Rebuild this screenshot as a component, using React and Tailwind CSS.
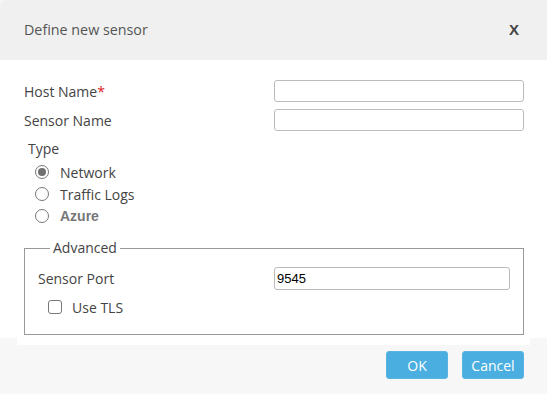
export default function App() {
  const radios = [
    { label: 'Network', checked: true },
    { label: 'Traffic Logs', checked: false },
    { label: 'Azure', checked: false, odd: true },
  ]

  return (
    <div className="w-[547px] h-[394px] bg-[#f7f7f7] flex flex-col text-[#444] font-['Open_Sans',sans-serif] text-[14px]">
      <div className="h-[60px] bg-[#f0f0f0] rounded-tl-[6px] flex items-center justify-between pl-6 pr-[28px] shrink-0">
        <span className="text-[#555] text-[14.3px]">Define new sensor</span>
        <span className="font-bold text-[#444] font-['Liberation_Sans',sans-serif] text-[15px]">X</span>
      </div>

      <div className="h-[278px] bg-white pl-6 pr-[23px] pt-[20px] shrink-0">
        <div className="grid grid-cols-[250px_1fr] items-center h-[22px]">
          <span>
            Host Name<span className="text-[#e02020]">*</span>
          </span>
          <input className="h-[22px] border border-[#bbb] rounded-[3px] outline-none" />
        </div>
        <div className="grid grid-cols-[250px_1fr] items-center h-[22px] mt-[7px]">
          <span>Sensor Name</span>
          <input className="h-[22px] border border-[#bbb] rounded-[3px] outline-none" />
        </div>

        <div className="mt-[8px] ml-[4px] leading-[20px]">Type</div>
        <div className="ml-[11px] mt-[2px] flex flex-col">
          {radios.map((r) => (
            <div key={r.label} className="flex items-center h-[22px] gap-[11px]">
              <span className="w-[14px] h-[14px] rounded-full border border-[#777] flex items-center justify-center">
                {r.checked && <span className="w-[8px] h-[8px] rounded-full bg-[#6f6f6f]" />}
              </span>
              <span className={r.odd ? "font-['Liberation_Sans',sans-serif] font-semibold text-[#777]" : ''}>{r.label}</span>
            </div>
          ))}
        </div>

        <fieldset className="mt-[12px] border border-[#999] h-[96px] pl-[13px] pr-[13px]">
          <legend className="ml-[12px] px-[3px] leading-[18px]">Advanced</legend>
          <div className="grid grid-cols-[236px_1fr] items-center h-[24px] mt-[9px]">
            <span>Sensor Port</span>
            <input
              defaultValue="9545"
              className="h-[23px] border border-[#bbb] rounded-[3px] outline-none pl-[2px] text-black font-['Liberation_Sans',sans-serif] text-[13px]"
            />
          </div>
          <div className="flex items-center gap-[10px] ml-[10px] mt-[7px] h-[20px]">
            <span className="w-[14px] h-[14px] rounded-[3px] border border-[#777]" />
            <span>Use TLS</span>
          </div>
        </fieldset>
      </div>

      <div className="flex-1 flex flex-col">
        <div className="mx-[17px] h-[7px] bg-white" />
        <div className="flex justify-end gap-[14px] pr-[23px] mt-[6px]">
          <button className="w-[62px] h-[28px] bg-[#4aaee0] text-white rounded-[3px] border border-[#5ab4e2]">OK</button>
          <button className="w-[62px] h-[28px] bg-[#4aaee0] text-white rounded-[3px] border border-[#5ab4e2]">Cancel</button>
        </div>
      </div>
    </div>
  )
}
